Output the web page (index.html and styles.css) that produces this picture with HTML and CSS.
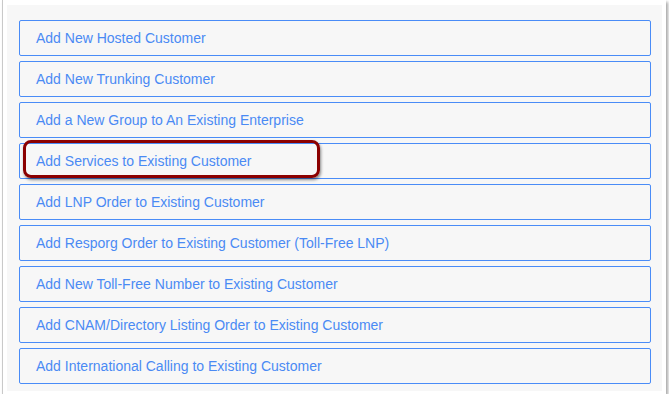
FILE: index.html
```html
<!DOCTYPE html>
<html lang="en">
<head>
    <meta charset="UTF-8">
    <title>Order Types</title>
    <link rel="stylesheet" href="styles.css">
</head>
<body>
    <div class="frame">
        <div class="panel">
            <a class="option" href="#">Add New Hosted Customer</a>
            <a class="option" href="#">Add New Trunking Customer</a>
            <a class="option" href="#">Add a New Group to An Existing Enterprise</a>
            <a class="option highlighted" href="#">Add Services to Existing Customer<span class="callout"></span></a>
            <a class="option" href="#">Add LNP Order to Existing Customer</a>
            <a class="option" href="#">Add Resporg Order to Existing Customer (Toll-Free LNP)</a>
            <a class="option" href="#">Add New Toll-Free Number to Existing Customer</a>
            <a class="option" href="#">Add CNAM/Directory Listing Order to Existing Customer</a>
            <a class="option" href="#">Add International Calling to Existing Customer</a>
        </div>
    </div>
</body>
</html>
```

FILE: styles.css
```css
body {
    margin: 0;
    background-color: #ffffff;
    font-family: "Liberation Sans", Arial, sans-serif;
}
.frame {
    margin-left: 2px;
    width: 664px;
    height: 394px;
    box-sizing: border-box;
    padding: 5px 4px 0 4px;
    background-color: #ffffff;
    border-left: 1px solid #c9c9c9;
    box-shadow: 2px 2px 3px rgba(0, 0, 0, 0.35);
}
.panel {
    display: flex;
    flex-direction: column;
    gap: 5px;
    padding: 15px 11px 7px 12px;
    background-color: #f7f7f7;
}
.option {
    position: relative;
    display: flex;
    align-items: center;
    height: 36px;
    box-sizing: border-box;
    padding-left: 16px;
    border: 1px solid #4a8cf7;
    border-radius: 2px;
    color: #4a8af4;
    font-size: 14px;
    text-decoration: none;
}
.callout {
    position: absolute;
    left: 3px;
    top: -4px;
    width: 297px;
    height: 38px;
    box-sizing: border-box;
    border: 3px solid #8b0000;
    border-radius: 8px;
    box-shadow: 1px 2px 3px rgba(0, 0, 0, 0.45);
}
```
